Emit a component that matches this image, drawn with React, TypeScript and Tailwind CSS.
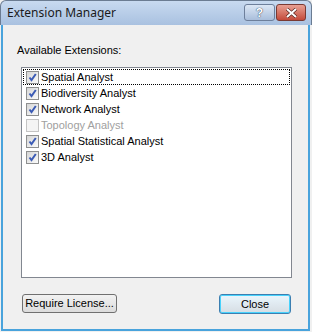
import React from "react";

const items: { label: string; checked: boolean; disabled?: boolean }[] = [
  { label: "Spatial Analyst", checked: true },
  { label: "Biodiversity Analyst", checked: true },
  { label: "Network Analyst", checked: true },
  { label: "Topology Analyst", checked: false, disabled: true },
  { label: "Spatial Statistical Analyst", checked: true },
  { label: "3D Analyst", checked: true },
];

function CheckBox({ checked, disabled }: { checked: boolean; disabled?: boolean }) {
  return (
    <div
      className={
        disabled
          ? "w-[13px] h-[13px] border border-[#c4c4c4] bg-[#f4f4f4] shrink-0"
          : "w-[13px] h-[13px] border border-[#8e8f8f] bg-gradient-to-br from-[#d6d6d6] to-[#fbfbfb] shrink-0 flex items-center justify-center"
      }
    >
      {checked && (
        <svg width="11" height="11" viewBox="0 0 11 11">
          <path d="M2.5 5.5 L4.5 8 L8.8 2" stroke="#3b5bb5" strokeWidth="2" fill="none" />
        </svg>
      )}
    </div>
  );
}

export default function App() {
  return (
    <div className="w-[312px] h-[332px] bg-[#f0f0f0] flex flex-col overflow-hidden" style={{ fontFamily: '"Liberation Sans", Arial, sans-serif' }}>
      {/* title bar */}
      <div className="h-[25px] shrink-0 bg-gradient-to-b from-[#c8daf0] to-[#a9c1e0] border border-b-0 border-[#6b7c92] rounded-t-[6px] flex items-center pl-[6px] pr-[6px]">
        <span className="text-[12px] text-[#1a1a1a]" style={{ fontFamily: '"Noto Sans", "Open Sans", sans-serif' }}>
          Extension Manager
        </span>
        <div className="ml-auto flex gap-[1px] items-start self-start mt-[3px] mr-[-1px]">
          <div className="w-[31px] h-[17px] rounded-[3px] border border-[#6d7f9b] bg-gradient-to-b from-[#dce7f5] to-[#a9bedb] flex items-center justify-center text-[12px] font-bold text-white" style={{ textShadow: "0 0 1px #34465f, 0 0 1px #34465f" }}>
            ?
          </div>
          <div className="w-[30px] h-[17px] rounded-[3px] border border-[#7a3a33] bg-gradient-to-b from-[#e8a093] to-[#c3493a] flex items-center justify-center">
            <svg width="13" height="10" viewBox="0 0 13 10">
              <path d="M2 1 L11 9 M11 1 L2 9" stroke="#4a1d18" strokeWidth="3.2" />
              <path d="M2 1 L11 9 M11 1 L2 9" stroke="#ffffff" strokeWidth="2" />
            </svg>
          </div>
        </div>
      </div>
      {/* body */}
      <div className="flex-1 ml-[1px] mr-[2px] mb-[1px] border-x-2 border-b-2 border-[#49a3dc] flex flex-col">
        <div className="pl-[14px] pt-[19px] text-[11px] leading-[13px] text-black">Available Extensions:</div>
        <div className="ml-[18px] mr-[16px] mt-[10px] h-[211px] border border-[#828790] bg-white pt-[1px] px-[1px]">
          {items.map((it, i) => (
            <div
              key={it.label}
              className={
                i === 0
                  ? "h-[16px] flex items-center pl-[2px] gap-[2px] border border-dotted border-black"
                  : "h-[16px] flex items-center pl-[3px] gap-[2px]"
              }
            >
              <CheckBox checked={it.checked} disabled={it.disabled} />
              <span className={it.disabled ? "text-[11px] text-[#a0a0a0]" : "text-[11px] text-black"}>{it.label}</span>
            </div>
          ))}
        </div>
        <div className="flex justify-between ml-[19px] mr-[17px] mt-[16px]">
          <button className="w-[95px] h-[19px] rounded-[3px] border border-[#707070] bg-gradient-to-b from-[#f2f2f2] to-[#dcdcdc] text-[11px] text-black">
            Require License...
          </button>
          <button className="w-[72px] h-[20px] rounded-[3px] border border-[#3c7fb1] bg-gradient-to-b from-[#eaf6fd] to-[#d6dde3] text-[11px] text-black shadow-[inset_0_0_0_1px_#48d2fc]">
            Close
          </button>
        </div>
      </div>
    </div>
  );
}
